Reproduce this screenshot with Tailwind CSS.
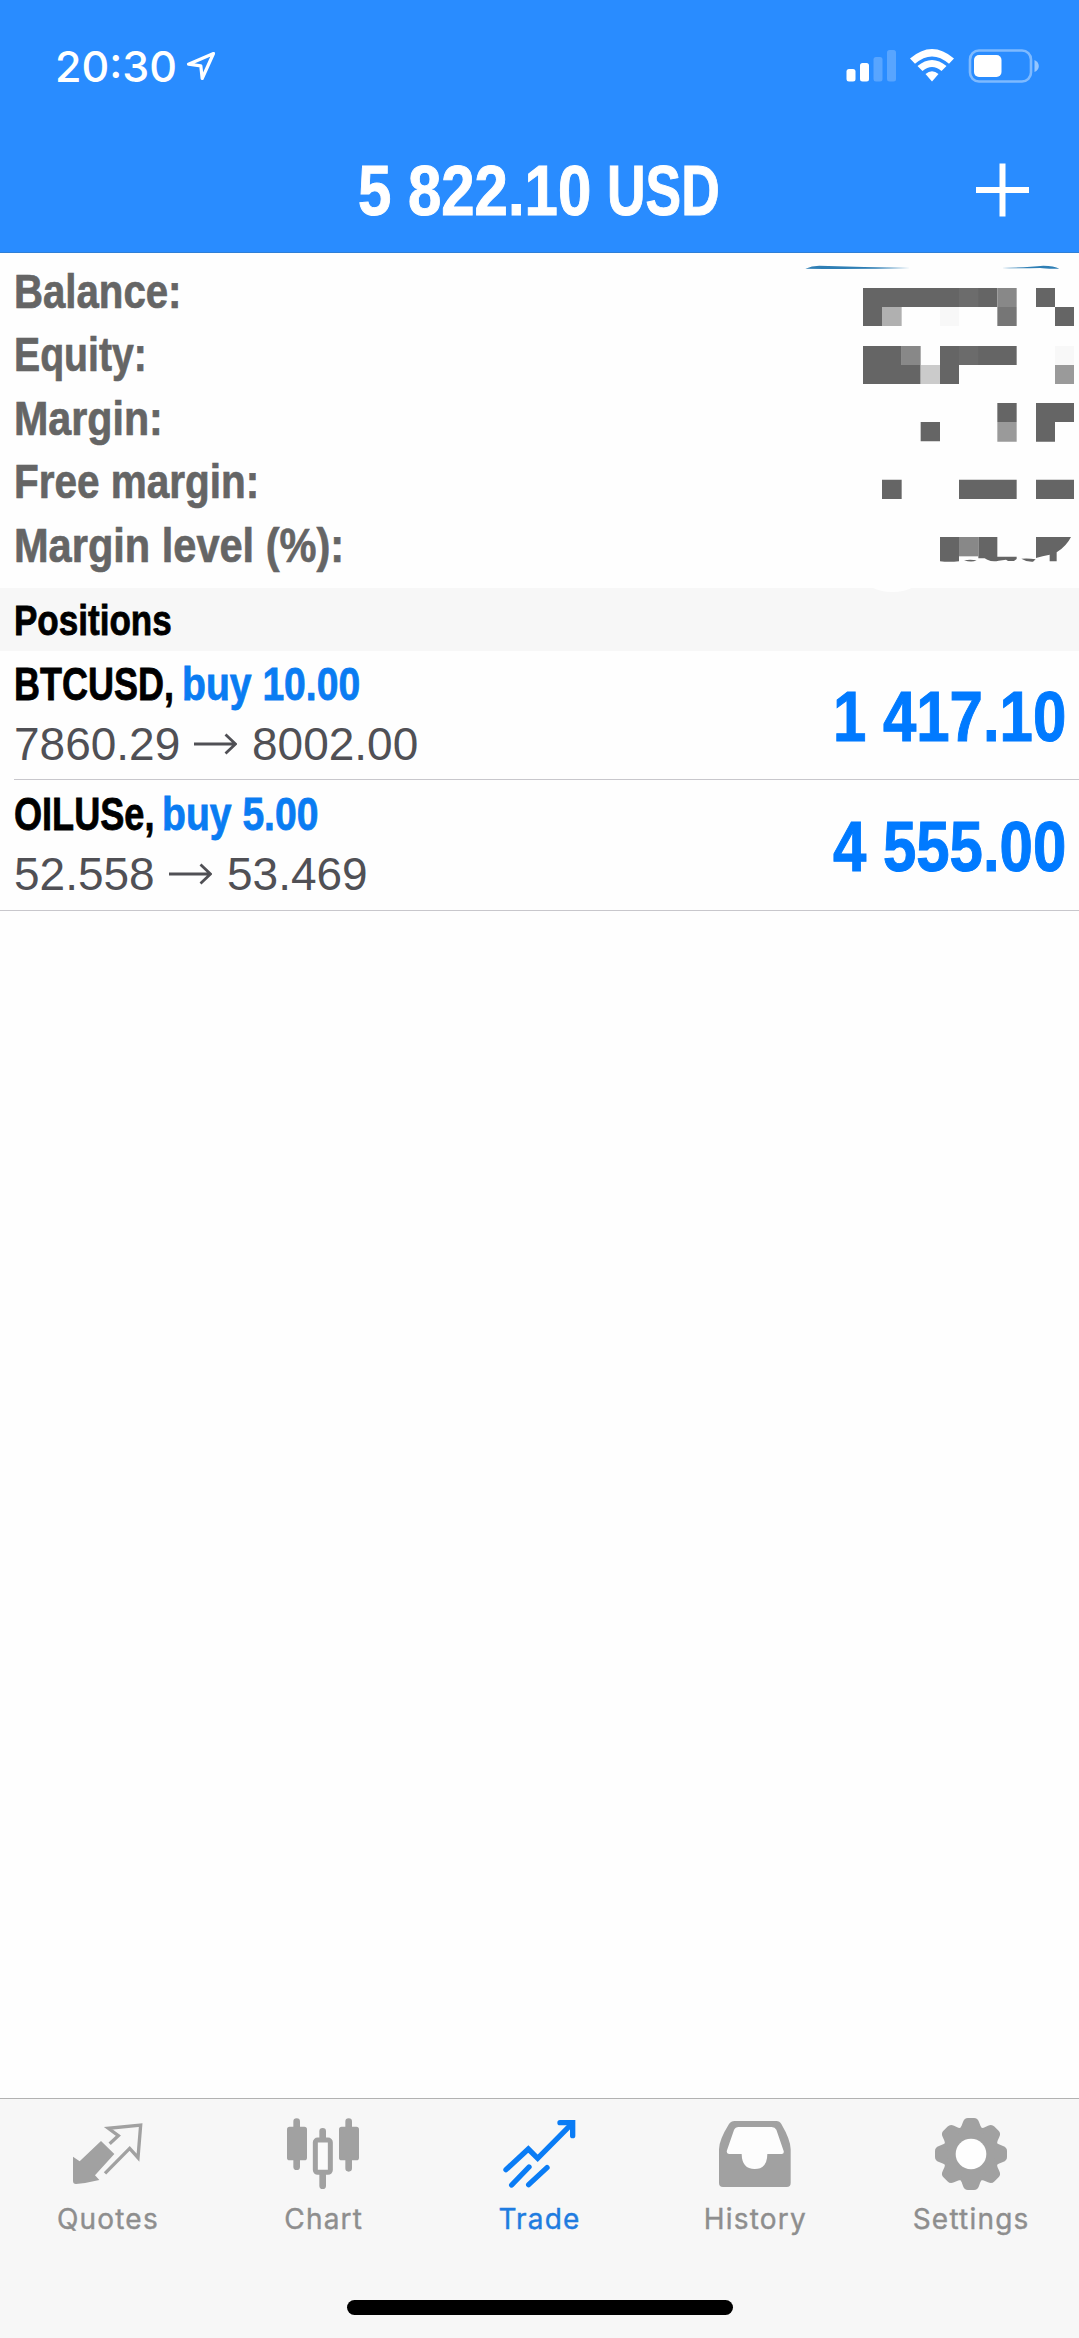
<!DOCTYPE html>
<html lang="en">
<head>
<meta charset="utf-8">
<title>Trade</title>
<script src="https://cdn.jsdelivr.net/npm/@tailwindcss/browser@4"></script>
</head>
<body class="bg-[#fefefe]">
<div class="flex h-[2338px] w-[1079px] flex-col overflow-hidden bg-[#fefefe] font-['Liberation_Sans',Arial,sans-serif]">

  <header class="flex h-[253px] shrink-0 flex-col border-b border-[#2f7fd6] bg-[#298cff] text-white">
    <div class="flex h-[132px] items-center pl-[55px] pr-[40px]">
      <span class="w-[131px] whitespace-nowrap font-['Inter',sans-serif] text-[43px] font-medium leading-[52px]">20:30</span>
      <svg class="h-[30px] w-[30px]" viewBox="0 0 30 30" fill="none" stroke="currentColor" stroke-width="3.2" stroke-linejoin="round"><path d="M27.5 2.5L2.5 13.2L14.8 14.8L16.2 27.5Z"/></svg>
      <svg class="ml-auto h-[34px] w-[193px]" viewBox="0 0 193 34" fill="currentColor">
        <rect x="0.5" y="20" width="9" height="12.5" rx="2.5"/>
        <rect x="14" y="14" width="9" height="18.500" rx="2.500"/>
        <rect x="27.500" y="8" width="9" height="24.500" rx="2.500" opacity=".22"/>
        <rect x="41" y="1" width="9" height="31.500" rx="2.500" opacity=".22"/>
        <path d="M64 9.500Q86 -9.500 108 9.500L103 14.800Q86 0 69 14.800Z"/>
        <path d="M71.500 17Q86 5 100.500 17L95.500 22Q86 14 76.500 22Z"/>
        <path d="M79.500 25Q86 19.500 92.500 25L86 32.500Z"/>
        <rect x="124" y="1.500" width="61" height="31" rx="9" fill="none" stroke="currentColor" stroke-width="2.600" opacity=".4"/>
        <rect x="128" y="6" width="27.500" height="22" rx="5"/>
        <path d="M188.500 11Q192.800 13 192.800 17T188.500 23Z" opacity=".5"/>
      </svg>
    </div>
    <div class="flex h-[116px] items-center">
      <div class="flex h-[80px] w-full items-center pl-[358px] pr-[50px] pt-[2px] text-[70px] font-bold leading-[80px] [-webkit-text-stroke:1px]">
        <span class="w-[249px]"><span class="block origin-left scale-x-[0.856] whitespace-nowrap">5 822.10</span></span>
        <span class="w-[120px]"><span class="block origin-left scale-x-[0.763] whitespace-nowrap">USD</span></span>
        <svg class="mb-[2px] ml-auto h-[54px] w-[53px]" viewBox="0 0 53 54" stroke="currentColor" stroke-width="6"><path d="M26.500 0.500V53.500M0 27H53"/></svg>
      </div>
    </div>
  </header>

  <section class="relative flex h-[335px] shrink-0 justify-between pl-[14px]">
    <div class="flex w-[400px] flex-col pt-[7px] text-[49px] font-bold leading-[63.400px] text-[#656565] [-webkit-text-stroke:0.7px]">
      <span class="block origin-left scale-x-[0.82] whitespace-nowrap">Balance:</span>
      <span class="block origin-left scale-x-[0.8] whitespace-nowrap">Equity:</span>
      <span class="block origin-left scale-x-[0.841] whitespace-nowrap">Margin:</span>
      <span class="block origin-left scale-x-[0.826] whitespace-nowrap">Free margin:</span>
      <span class="block origin-left scale-x-[0.848] whitespace-nowrap">Margin level (%):</span>
    </div>
    <svg class="h-[335px] w-[299px] overflow-visible" viewBox="0 9 897 1005" fill="#656565">
      <path fill="#2f7fb5" d="M76 56Q95 47 118 47Q250 51 390 54Q240 58 76 56ZM665 54Q740 52 790 47Q822 47 838 56Q800 57 780 54Q720 56 665 54Z"/>
      <path d="M249 114H652V171H306V228H249ZM768 114h57v57h57v57h-57v-57h-57Z"/>
      <path fill="#6c6c6c" d="M537 114h58v57h-58Z"/>
      <path fill="#888" d="M652 114h58v57h-58ZM365 288h57v57h-57Z"/>
      <path fill="#767676" d="M652 171h58v57h-58Z"/>
      <path fill="#b0b0b0" d="M306 171h59v57h-59Z"/>
      <path fill="#f8f8f8" d="M480 171h57v57h-57ZM825 288h57v57h-57Z"/>
      <path d="M249 288H365V345H422V402H249ZM480 288H710V345H537V402H480Z"/>
      <path fill="#6b6b6b" d="M537 288h58v57h-58Z"/>
      <path fill="#cbcbcb" d="M422 345h58v57h-58Z"/>
      <path fill="#9a9a9a" d="M825 345h57v57h-57ZM652 516h58v59h-58Z"/>
      <path d="M652 459h58v57h-58ZM422 516h58v58h-58ZM768 459h114v57h-57v59h-57Z"/>
      <path d="M306 689h59v58h-59ZM537 689h173v58H537ZM768 689h114v58H768Z"/>
      <path d="M480 861h57v73q-30 3-57 0ZM595 861h57v59h58v7l-8 6h-18l-6-4-22 3q-18 5-34-3l-8-4H595ZM768 861h105q-14 28-43 46v27h-21v-20q-22 4-41 10ZM552 931q18-4 38 0-15 7-38 0ZM724 926q22-2 43 2l-8 7q-20 1-35-9Z"/>
      <path fill="#888" d="M537 861h58v58h-58Z"/>
      <path fill="#fefefe" d="M275 1012H400Q375 1026 337 1026T275 1012Z"/>
    </svg>
  </section>

  <h2 class="flex h-[63px] shrink-0 items-center bg-[#f7f7f7] pl-[14px] text-[43px] font-bold leading-[48px] text-black [-webkit-text-stroke:0.8px]"><span class="block origin-left scale-x-[0.815] whitespace-nowrap">Positions</span></h2>

  <div class="flex h-[129px] shrink-0 pl-[14px]">
    <div class="flex w-full justify-between border-b border-[#c8c7cc]">
      <div class="flex flex-col pt-[4px]">
        <div class="flex h-[59px] text-[46px] font-bold leading-[58px] [-webkit-text-stroke:0.8px]">
          <span class="w-[168px]"><span class="block origin-left scale-x-[0.782] whitespace-nowrap text-black">BTCUSD,</span></span>
          <span class="w-[200px]"><span class="block origin-left scale-x-[0.85] whitespace-nowrap text-[#0a7cf2]">buy 10.00</span></span>
        </div>
        <div class="flex h-[60px] items-center text-[46px] leading-[60px] text-[#505055]">
          <span class="w-[180px]">7860.29</span>
          <svg class="mr-[15px] h-[22px] w-[43px]" viewBox="0 0 43 22" fill="none" stroke="currentColor" stroke-width="2.800"><path d="M0 11H41M31.500 1.500L41.500 11L31.500 20.500"/></svg>
          <span>8002.00</span>
        </div>
      </div>
      <div class="flex w-[246px] items-center pt-[3px] text-[70px] font-bold leading-[80px] text-[#007aff] [-webkit-text-stroke:1px]"><span class="block origin-left scale-x-[0.856] whitespace-nowrap">1 417.10</span></div>
    </div>
  </div>

  <div class="flex h-[131px] shrink-0 justify-between border-b border-[#c8c7cc] pl-[14px]">
    <div class="flex flex-col pt-[5px]">
      <div class="flex h-[59px] text-[46px] font-bold leading-[58px] [-webkit-text-stroke:0.8px]">
        <span class="w-[148px]"><span class="block origin-left scale-x-[0.785] whitespace-nowrap text-black">OILUSe,</span></span>
        <span class="w-[200px]"><span class="block origin-left scale-x-[0.85] whitespace-nowrap text-[#0a7cf2]">buy 5.00</span></span>
      </div>
      <div class="flex h-[60px] items-center text-[46px] leading-[60px] text-[#505055]">
        <span class="w-[155px]">52.558</span>
        <svg class="mr-[15px] h-[22px] w-[43px]" viewBox="0 0 43 22" fill="none" stroke="currentColor" stroke-width="2.800"><path d="M0 11H41M31.500 1.500L41.500 11L31.500 20.500"/></svg>
        <span>53.469</span>
      </div>
    </div>
    <div class="flex w-[246px] items-center pt-[3px] text-[70px] font-bold leading-[80px] text-[#007aff] [-webkit-text-stroke:1px]"><span class="block origin-left scale-x-[0.856] whitespace-nowrap">4 555.00</span></div>
  </div>

  <nav class="mt-auto flex h-[240px] shrink-0 flex-col items-center border-t border-[#b2b2b2] bg-[#f7f7f7]">
    <div class="grid h-[201px] w-full grid-cols-5 font-['Inter',sans-serif] text-[28px] leading-[36px] tracking-[1.2px] text-[#8e8e8e] [-webkit-text-stroke:0.4px]">
      <div class="flex flex-col items-center pt-[17px]">
        <svg class="h-[76px] w-[76px]" viewBox="210 105 228 228" fill="#a1a1a1"><path d="M219 227L239 241L303 180L343 219L285 283L298 297Q262 306 228 309Q219 309 219 300Z"/><path d="M329 188L355 164L325 142L422 132L414 230L389 202L315 277" fill="none" stroke="#a1a1a1" stroke-width="10"/></svg>
        <span class="mt-[9px]">Quotes</span>
      </div>
      <div class="flex flex-col items-center pt-[17px]">
        <svg class="h-[76px] w-[76px]" viewBox="858 105 228 228" fill="#a1a1a1"><path d="M890 122V257M1046 122V262M968 151V175M968 275V314" stroke="#a1a1a1" stroke-width="20" stroke-linecap="round"/><rect x="861" y="137" width="60" height="101" rx="8"/><rect x="1017" y="137" width="60" height="101" rx="8"/><rect x="946" y="177" width="45" height="97" rx="7" fill="#fafafa" stroke="#a1a1a1" stroke-width="15"/></svg>
        <span class="mt-[9px]">Chart</span>
      </div>
      <div class="flex flex-col items-center pt-[17px] text-[#1f7ce0]">
        <svg class="h-[76px] w-[76px]" viewBox="303 105 228 228" fill="none" stroke="#0a7cf5" stroke-width="16"><path d="M318 266L385 204L413 232L516 128" stroke-linecap="round"/><path d="M480 125H518V164" stroke-linecap="round"/><path d="M500 118H525V150Z" fill="#0a7cf5" stroke="none"/><path d="M335 312L387 258M386 311L441 260" stroke-linecap="round"/></svg>
        <span class="mt-[9px]">Trade</span>
      </div>
      <div class="flex flex-col items-center pt-[17px]">
        <svg class="h-[76px] w-[76px]" viewBox="109 105 228 228"><path fill="#a1a1a1" d="M162 120H287Q297 120 302 129Q330 177 330 205V306Q330 318 318 318H127Q115 318 115 306V205Q115 177 145 129Q151 120 162 120Z"/><path fill="#fdfdfd" d="M174 138H273Q283 138 287 146L309 210Q311 219 303 219H260Q260 264 222 264T183 219H145Q136 218 139 208L160 147Q164 138 174 138Z"/></svg>
        <span class="mt-[9px]">History</span>
      </div>
      <div class="flex flex-col items-center pt-[17px]">
        <svg class="h-[76px] w-[76px]" viewBox="-114 -114 228 228" fill="#a1a1a1">
          <defs><path id="tooth" d="M-38 -70Q-27 -83 -24 -96Q-20 -108 -9 -108H9Q20 -108 24 -96Q27 -83 38 -70Z"/></defs>
          <circle r="82"/>
          <use href="#tooth"/><use href="#tooth" transform="rotate(45)"/><use href="#tooth" transform="rotate(90)"/><use href="#tooth" transform="rotate(135)"/><use href="#tooth" transform="rotate(180)"/><use href="#tooth" transform="rotate(225)"/><use href="#tooth" transform="rotate(270)"/><use href="#tooth" transform="rotate(315)"/>
          <circle r="46" fill="#fefefe"/>
        </svg>
        <span class="mt-[9px]">Settings</span>
      </div>
    </div>
    <div class="h-[15px] w-[386px] rounded-full bg-black"></div>
  </nav>
</div>
</body>
</html>
